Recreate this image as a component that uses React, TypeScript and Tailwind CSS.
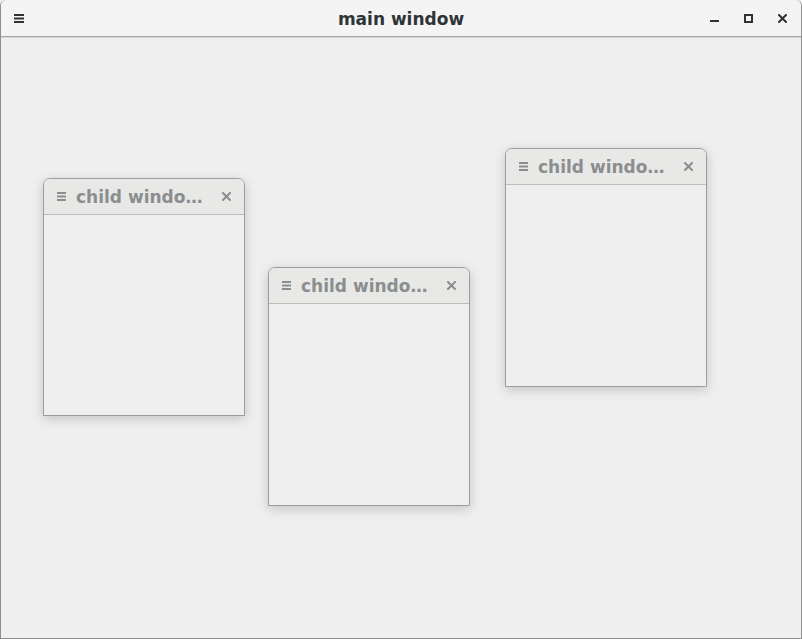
import React from "react";

function MenuIcon({ color, w = 9 }: { color: string; w?: number }) {
  return (
    <svg width={w} height="9" viewBox={`0 0 ${w} 9`} className="block">
      <rect x="0" y="0" width={w} height="2" fill={color} />
      <rect x="0" y="3.5" width={w} height="2" fill={color} />
      <rect x="0" y="7" width={w} height="2" fill={color} />
    </svg>
  );
}

function CloseIcon({ color }: { color: string }) {
  return (
    <svg width="9" height="9" viewBox="0 0 9 9" className="block">
      <path d="M1 1L8 8M8 1L1 8" stroke={color} strokeWidth="2" strokeLinecap="square" />
    </svg>
  );
}

function ChildWindow({ left, top, h }: { left: number; top: number; h: number }) {
  return (
    <div
      className="absolute w-[202px] flex flex-col border border-[#9c9c9c] rounded-t-[7px] bg-[#efefef] shadow-[0_3px_12px_rgba(0,0,0,0.18)]"
      style={{ left, top, height: h }}
    >
      <div className="h-[36px] shrink-0 flex items-center pl-[13px] pr-[13px] bg-[#e8e8e7] border-b border-[#bdbdbd] rounded-t-[6px]">
        <MenuIcon color="#8b8e8f" />
        <span className="ml-[10px] mt-[2px] text-[17px] font-bold text-[#8b8e8f] leading-none whitespace-nowrap" style={{ fontFamily: '"DejaVu Sans", sans-serif' }}>
          child windo…
        </span>
        <div className="flex-1" />
        <CloseIcon color="#8b8e8f" />
      </div>
      <div className="flex-1" />
    </div>
  );
}

export default function App() {
  return (
    <div className="w-[802px] h-[639px] relative overflow-hidden bg-[#efefef]" style={{ fontFamily: '"DejaVu Sans", sans-serif' }}>
      <div className="absolute inset-0 border-x border-b border-[#8f8f8f] rounded-tl-[6px] rounded-tr-[6px] flex flex-col">
        <div className="h-[37px] shrink-0 flex items-center px-[13px] bg-[#f4f4f4] border-b border-[#a4a4a4] rounded-t-[6px] relative">
          <MenuIcon color="#2e3436" w={10} />
          <div className="absolute left-0 right-0 top-[11px] text-center text-[17px] font-bold text-[#2e3436] leading-none pointer-events-none">main window</div>
          <div className="flex-1" />
          <div className="flex items-center gap-[25px] pr-[1px]">
            <svg width="9" height="9" viewBox="0 0 9 9" className="block">
              <rect x="0" y="6" width="9" height="2" fill="#2e3436" />
            </svg>
            <svg width="9" height="9" viewBox="0 0 9 9" className="block">
              <rect x="1" y="1" width="7" height="7" fill="none" stroke="#2e3436" strokeWidth="2" />
            </svg>
            <CloseIcon color="#2e3436" />
          </div>
        </div>
        <div className="flex-1 bg-[#efefef] border-t border-[#d8d8d8]" />
      </div>
      <ChildWindow left={43} top={178} h={238} />
      <ChildWindow left={268} top={267} h={239} />
      <ChildWindow left={505} top={148} h={239} />
    </div>
  );
}
